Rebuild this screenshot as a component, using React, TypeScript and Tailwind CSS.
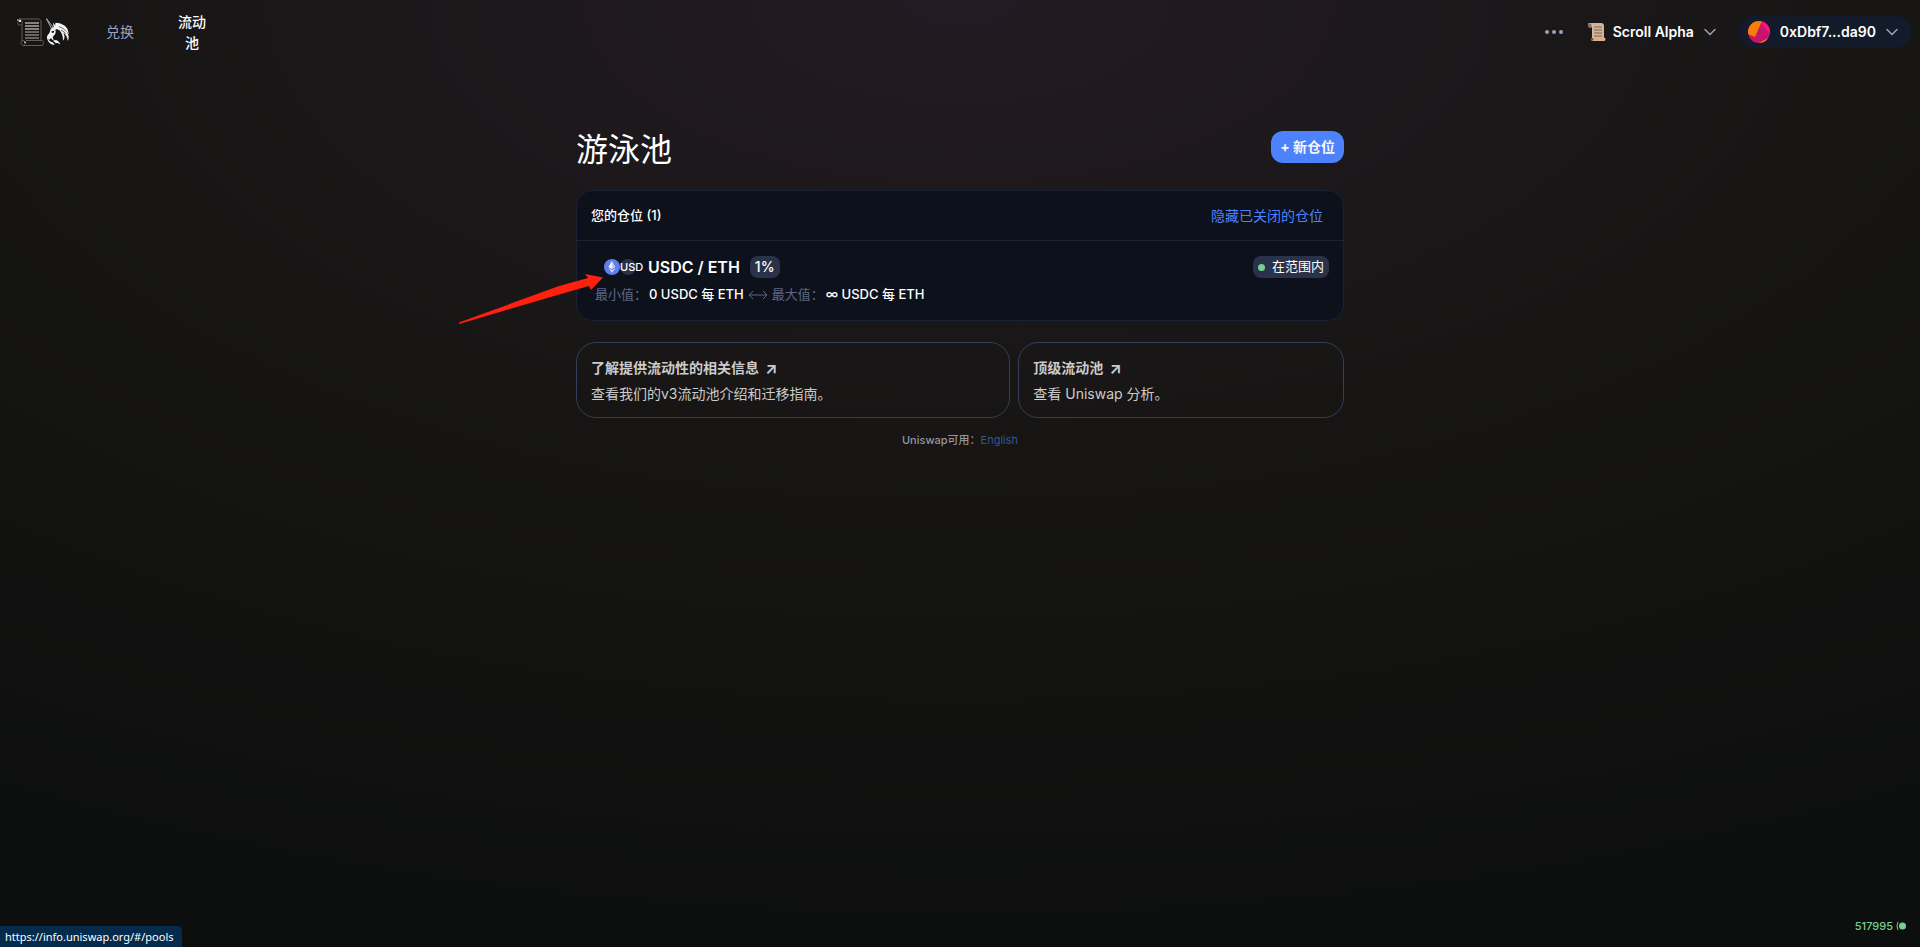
import clsx from "clsx";
import type { ReactNode } from "react";

function ScrollLogo() {
  return (
    <svg
      aria-hidden="true"
      className="h-7 w-7"
      fill="none"
      viewBox="0 0 28 28"
    >
      <path
        d="M3 1h19c2 0 3 1 3 3v18M3 1c4 0 4 6 1 6S1 4 3 4M6 6v17M10 22.500h15c4 0 3.500 5 0 5H8c-4 0-4-5-1-5s3 4 1 4"
        stroke="#5d5d5c"
      />
      <path d="M1 2l4 .5M3 3.500h2M8 24l2 .5" stroke="#e5e5e5" />
      <path d="M9 5h14M9 8h14M9 11h14" stroke="#f0f0f0" strokeWidth="1.200" />
      <path
        d="M9 14h14M9 17h14M9 20h14"
        stroke="#b8b8b8"
        strokeWidth="1.200"
      />
    </svg>
  );
}

function UnicornLogo() {
  return (
    <svg aria-hidden="true" className="h-7 w-6" viewBox="136 54 75 86">
      <path
        d="M137 55l19 24 1 7-5-2z"
        fill="#171615"
        stroke="#d0d0d0"
        strokeWidth="2.500"
      />
      <path
        d="M151 87l9-5-2-14 10 12c6 3 9 7 10 12-5-4-9-4-13-2 3 7 1 14-5 19-4 3-4 8 1 11l-4 2-6-6-4 5-7-2-1-9 8-11z"
        fill="#f5f5f5"
      />
      <path d="M153 95l9-2-2 6-5 1z" fill="#171615" />
      <path
        d="M166 68c18 1 31 8 37 20l5 16-8-9c8 12 9 22 4 30-1-13-6-21-14-26 5 9 6 18-1 25 1-16-5-30-21-42-4-3-4-8-2-14z"
        fill="#f5f5f5"
      />
      <path
        d="M176 80c10 3 18 9 23 15M183 92c7 3 12 6 14 11"
        fill="none"
        stroke="#171615"
        strokeWidth="2"
      />
      <path
        d="M139 111c3 11 9 16 19 19l5 8c-14-2-23-10-24-27zM158 124c8-5 18-1 23 12-6-5-10-6-14-4z"
        fill="#f5f5f5"
      />
    </svg>
  );
}

function ScrollEmoji() {
  return (
    <svg aria-hidden="true" className="h-5 w-5" viewBox="0 0 20 20">
      <path d="M2 1h12c2 0 3 1 3 3v12H5V5H2C.5 4 .5 1 2 1z" fill="#d3b59b" />
      <path d="M1 2.500C1 1 4 .5 4.500 3v3H2.500C1 5 1 4 1 2.500z" fill="#8d6a58" />
      <path d="M7 5h8M7 8h8M7 11h8M7 14h8" stroke="#806250" />
      <path
        d="M6 15.500h11c2 0 2 3.500 0 3.500H6c-2.500 0-2.500-3.500 0-3.500z"
        fill="#dcae91"
      />
      <path d="M5 16c2 0 2 2.500 0 2.500S4 16 5 16z" fill="#76503f" />
    </svg>
  );
}

function Avatar() {
  return (
    <svg aria-hidden="true" className="h-[22px] w-[22px]" viewBox="0 0 22 22">
      <defs>
        <clipPath id="avatar">
          <circle cx="11" cy="11" r="11" />
        </clipPath>
      </defs>
      <g clipPath="url(#avatar)">
        <path d="M0 0h22v22H0z" fill="#c7146c" />
        <path d="M0 0h14L7 16 0 13z" fill="#f77f04" />
        <path d="M13 0h9v13L13 2z" fill="#fb1482" />
        <path d="M11 22l11-6v6z" fill="#f77f04" />
      </g>
    </svg>
  );
}

function Chevron() {
  return (
    <svg aria-hidden="true" className="h-3 w-3" fill="none" viewBox="0 0 12 12">
      <path
        d="M1 3.500l5 5 5-5"
        stroke="#98a1c0"
        strokeLinecap="round"
        strokeLinejoin="round"
        strokeWidth="1.500"
      />
    </svg>
  );
}

function EthIcon() {
  return (
    <svg aria-hidden="true" className="h-4 w-4" viewBox="0 0 16 16">
      <circle cx="8" cy="8" fill="#627eea" r="8" />
      <path d="M8 2l3.500 6L8 10 4.500 8z" fill="#fff" opacity=".6" />
      <path d="M8 2v8L4.500 8z" fill="#fff" opacity=".8" />
      <path d="M4.500 9L8 11l3.500-2L8 14z" fill="#fff" opacity=".7" />
    </svg>
  );
}

function RangeArrow() {
  return (
    <svg
      aria-hidden="true"
      className="mx-1 h-3 w-5"
      fill="none"
      stroke="#5d6785"
      viewBox="0 0 20 12"
    >
      <path d="M1 6h18M5 2L1 6l4 4M15 2l4 4-4 4" />
    </svg>
  );
}

function Header() {
  return (
    <header className="flex h-16 items-center justify-between pl-4 pr-2">
      <div className="flex items-center">
        <a aria-label="Uniswap" className="flex items-center gap-0.5" href="#/">
          <ScrollLogo />
          <UnicornLogo />
        </a>
        <nav className="flex items-center text-sm">
          <a className="ml-9 w-8 text-[#98a1c0]" href="#/swap">
            兑换
          </a>
          <a
            className="ml-[38px] w-8 text-center font-medium leading-[21px] text-white"
            href="#/pool"
          >
            流动池
          </a>
        </nav>
      </div>
      <div className="flex items-center text-sm font-semibold">
        <button aria-label="Menu" className="mr-6 flex gap-[3px]" type="button">
          <span className="h-1 w-1 rounded-full bg-[#98a1c0]" />
          <span className="h-1 w-1 rounded-full bg-[#98a1c0]" />
          <span className="h-1 w-1 rounded-full bg-[#98a1c0]" />
        </button>
        <button className="mr-[22px] flex items-center" type="button">
          <ScrollEmoji />
          <span className="ml-1.5 mr-2.5">Scroll Alpha</span>
          <Chevron />
        </button>
        <button
          className="flex h-8 items-center rounded-full bg-[#131a2a] pl-2.5 pr-3.5"
          type="button"
        >
          <Avatar />
          <span className="mx-2.5">0xDbf7...da90</span>
          <Chevron />
        </button>
      </div>
    </header>
  );
}

function Positions() {
  return (
    <section className="overflow-hidden rounded-2xl border border-[#1b2236] bg-[#0d111c]">
      <div className="flex h-[50px] items-center justify-between border-b border-[#1b2236] pl-3.5 pr-5">
        <h2 className="text-[13px] font-medium">您的仓位 (1)</h2>
        <button className="text-sm text-[#4c82fb]" type="button">
          隐藏已关闭的仓位
        </button>
      </div>
      <a className="block h-[79px] pl-[18px] pr-3.5 pt-[15px]" href="#/pool/1">
        <div className="flex h-[22px] items-center justify-between">
          <div className="flex items-center pl-[9px]">
            <EthIcon />
            <span className="flex h-4 w-4 items-center whitespace-nowrap rounded-full bg-[#293249] text-[11px] font-medium">
              USD
            </span>
            <span className="ml-3 text-base font-semibold">USDC / ETH</span>
            <span className="ml-2.5 flex h-[22px] items-center rounded-lg bg-[#293249] px-[5px] text-sm font-medium">
              1%
            </span>
          </div>
          <span className="flex h-[22px] items-center rounded-lg bg-[#293249] px-[5px] text-[13px]">
            <span className="mr-[7px] h-[7px] w-[7px] rounded-full bg-[#76d191]" />
            在范围内
          </span>
        </div>
        <div className="mt-[7px] flex h-5 items-center text-[13px] font-medium">
          <span className="mr-0.5 font-normal text-[#5d6785]">最小值：</span>
          <span>0 USDC 每 ETH</span>
          <RangeArrow />
          <span className="mr-0.5 font-normal text-[#5d6785]">最大值：</span>
          <span>∞ USDC 每 ETH</span>
        </div>
      </a>
    </section>
  );
}

interface LinkCardProps {
  children: ReactNode;
  className?: string;
  href: string;
  title: string;
}

function LinkCard({ children, className, href, title }: LinkCardProps) {
  return (
    <a
      className={clsx(
        className,
        "block rounded-[20px] border border-[#343d59] px-3.5 py-[13px] text-sm text-[#cbcbcb]"
      )}
      href={href}
    >
      <span className="flex items-center font-bold leading-6">
        {title}
        <span className="ml-1.5 text-base leading-6">↗</span>
      </span>
      <span className="mt-1 block leading-5">{children}</span>
    </a>
  );
}

export default function App() {
  return (
    <div className="relative flex min-h-screen flex-col bg-[radial-gradient(100%_100%_at_50%_0%,#231b23_0%,#161513_50%,#0d0f0e_100%)] font-[Inter,'Noto_Sans_CJK_SC',sans-serif] text-white">
      <Header />
      <main className="relative mx-auto w-full max-w-3xl pt-[67px]">
        <div className="flex items-start justify-between">
          <h1 className="text-[32px] leading-[38px]">游泳池</h1>
          <button
            className="h-8 rounded-xl bg-[#4c82fb] px-[9px] text-sm font-bold text-[#f5f6fc]"
            type="button"
          >
            + 新仓位
          </button>
        </div>
        <div className="mt-[21px]">
          <Positions />
        </div>
        <div className="mt-[21px] grid grid-cols-[4fr_3fr] gap-2">
          <LinkCard
            href="https://docs.uniswap.org"
            title="了解提供流动性的相关信息"
          >
            查看我们的v3流动池介绍和迁移指南。
          </LinkCard>
          <LinkCard href="https://info.uniswap.org/#/pools" title="顶级流动池">
            查看 Uniswap 分析。
          </LinkCard>
        </div>
        <p className="mt-3 text-center text-[11px] font-medium leading-5 text-[#96979a]">
          Uniswap可用：
          <a className="font-normal text-[#365298]" href="#/?lng=en">
            English
          </a>
        </p>
        <svg
          aria-hidden="true"
          className="absolute -left-[117px] top-[208px] h-[54px] w-[146px]"
          viewBox="0 0 146 54"
        >
          <path
            d="M0 50.500L100 14l29-8-3-4 18 3.500-12 12.500-2-4-28 8L0 52z"
            fill="#ff200d"
          />
        </svg>
      </main>
      <footer className="mt-auto flex items-end justify-between">
        <span className="rounded-tr bg-[#042b4c] pl-[5px] pr-2 font-['Noto_Sans'] text-[11px] leading-[21px]">
          https://info.uniswap.org/#/pools
        </span>
        <span className="mb-[13px] mr-3.5 flex items-center text-[11px] font-medium leading-4 text-[#76d191]">
          517995
          <svg
            aria-hidden="true"
            className="ml-[3px] h-2 w-2.5"
            viewBox="0 0 10 8"
          >
            <path d="M2 0Q0 4 2 8" fill="none" stroke="#76d191" />
            <circle cx="6.500" cy="4" fill="#76d191" r="3.500" />
          </svg>
        </span>
      </footer>
    </div>
  );
}
